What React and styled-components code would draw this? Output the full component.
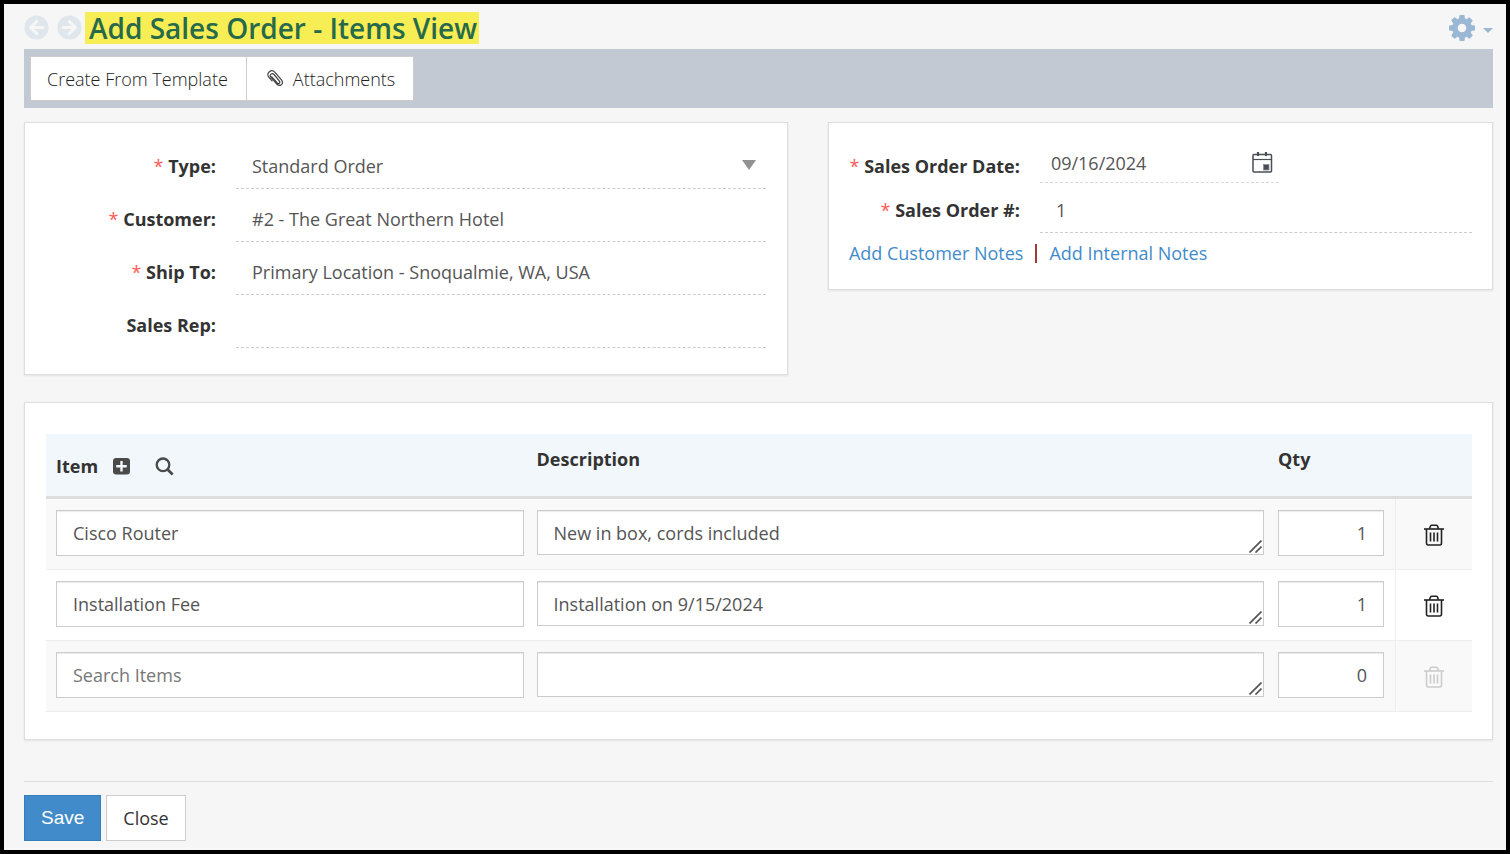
import React from "react";

import styled, { createGlobalStyle, css } from "styled-components";

import { FaArrowCircleLeft, FaArrowCircleRight } from "react-icons/fa";

const items = [
  { id: 1, name: "Cisco Router", description: "New in box, cords included", qty: 1 },
  { id: 2, name: "Installation Fee", description: "Installation on 9/15/2024", qty: 1 },
  { id: 3, name: "", description: "", qty: 0, empty: true },
];

const GearIcon = () => (
  <svg width="26" height="26" viewBox="0 128 1536 1536" fill="currentColor" aria-hidden="true">
    <path d="M1024 896q0-106-75-181t-181-75-181 75-75 181 75 181 181 75 181-75 75-181zm512-109v222q0 12-8 23t-20 13l-185 28q-19 54-39 91 35 50 107 138 10 12 10 25t-9 23q-27 37-99 108t-94 71q-12 0-26-9l-138-108q-44 23-91 38-16 136-29 186-7 28-36 28h-222q-14 0-24.500-8.500t-11.500-21.500l-28-184q-49-16-90-37l-141 107q-10 9-25 9-14 0-25-11-126-114-165-168-7-10-7-23 0-12 8-23 15-21 51-66.500t54-70.500q-27-50-41-99l-183-27q-13-2-21-12.500t-8-23.500v-222q0-12 8-23t19-13l186-28q14-46 39-92-40-57-107-138-10-12-10-24 0-10 9-23 26-36 98.500-107.500t94.500-71.500q13 0 26 10l138 107q44-23 91-38 16-136 29-186 7-28 36-28h222q14 0 24.500 8.500t11.500 21.500l28 184q49 16 90 37l142-107q9-9 24-9 13 0 25 10 129 119 165 170 7 8 7 22 0 12-8 23-15 21-51 66.500t-54 70.500q26 50 41 98l183 28q13 2 21 12.500t8 23.500z" />
  </svg>
);

const CaretIcon = () => (
  <svg width="10" height="10" viewBox="0 0 10 10" fill="currentColor" aria-hidden="true">
    <path d="M0 5h10L5 10z" />
  </svg>
);

const PaperclipIcon = () => (
  <svg width="17" height="17" viewBox="0 0 17 17" fill="none" stroke="#444" strokeWidth="1.200" strokeLinecap="round" aria-hidden="true">
    <path d="M4.800 6.800l5.400 6.200c1.500 1.600 3.500-.1 2.200-1.900L7 4.500C5 2.300 2 4.700 3.900 7.200l5.900 6.900c3 3.200 7.500-.4 4.800-3.900L7.800 2.200C4.400-1.400-1.400 3.100 1.700 7l3.400 3.900" />
  </svg>
);

const CalendarIcon = () => (
  <svg width="21" height="22" viewBox="0 0 21 22" fill="none" stroke="#4a4f57" aria-hidden="true">
    <rect x="1" y="2.500" width="18.500" height="17.500" rx="1" strokeWidth="1.500" />
    <path d="M1 7.500h18.500" strokeWidth="1.200" />
    <path d="M6 0v4M14 0v4" strokeWidth="2.200" />
    <rect x="11.500" y="12.500" width="5.500" height="5.500" fill="#4a4f57" stroke="#8b8f95" strokeWidth=".8" />
  </svg>
);

const PlusSquareIcon = () => (
  <svg width="17" height="17" viewBox="0 0 17 17" aria-hidden="true">
    <rect width="17" height="16.500" rx="3.200" fill="#4a4a4a" />
    <path d="M8.500 3v10.500M3.200 8.250h10.600" stroke="#f1f7fa" strokeWidth="2.400" />
  </svg>
);

const SearchIcon = () => (
  <svg width="19" height="19" viewBox="0 0 19 19" fill="none" stroke="#4a4a4a" aria-hidden="true">
    <circle cx="8" cy="7.800" r="6.300" strokeWidth="2.300" />
    <path d="M12.600 12.400l5 5" strokeWidth="2.800" />
  </svg>
);

const TrashIcon = () => (
  <svg width="20" height="22" viewBox="0 0 20 22" fill="none" stroke="currentColor" strokeWidth="1.600" aria-hidden="true">
    <path d="M0 5h20" />
    <path d="M5.500 4.800l1-2.700q.3-.9 1.300-.9h4.400q1 0 1.300.9l1 2.700" />
    <path d="M2.500 5v14q0 2 1.700 2h11.600q1.700 0 1.700-2V5" />
    <path d="M6.500 8.500v9M10 8.500v9M13.500 8.500v9" />
  </svg>
);

const GripIcon = () => (
  <svg width="13" height="13" viewBox="0 0 13 13" fill="none" stroke="#555" strokeWidth="1.700" aria-hidden="true">
    <path d="M.5 12.500l12-12M6.500 12.500l6-6" />
  </svg>
);

const Field = ({ id, label, required, children }) => (
  <Row>
    <Label htmlFor={id}>
      {required && <Required>*</Required>} {label}:
    </Label>
    {children}
  </Row>
);

const ItemRow = ({ item }) => (
  <tr>
    <td>
      <TextBox aria-label="Item" defaultValue={item.name} placeholder="Search Items" />
    </td>
    <td>
      <AreaWrap>
        <Area aria-label="Description" defaultValue={item.description} rows="1" />
        <Grip>
          <GripIcon />
        </Grip>
      </AreaWrap>
    </td>
    <QtyCell>
      <TextBox $right aria-label="Qty" defaultValue={item.qty} />
    </QtyCell>
    <DeleteCell>
      <DeleteButton type="button" aria-label="Delete item" disabled={item.empty}>
        <TrashIcon />
      </DeleteButton>
    </DeleteCell>
  </tr>
);

const App = () => (
  <Page>
    <GlobalStyle />
    <Header>
      <NavButton type="button" aria-label="Back">
        <FaArrowCircleLeft />
      </NavButton>
      <NavButton type="button" aria-label="Forward">
        <FaArrowCircleRight />
      </NavButton>
      <Title>Add Sales Order - Items View</Title>
      <Settings type="button" aria-label="Settings">
        <GearIcon />
        <CaretIcon />
      </Settings>
    </Header>

    <Toolbar>
      <ToolButton type="button">Create From Template</ToolButton>
      <ToolButton type="button" $icon>
        <PaperclipIcon />
        Attachments
      </ToolButton>
    </Toolbar>

    <Panels>
      <Card>
        <Fields>
          <Field id="type" label="Type" required>
            <SelectWrap>
              <Select id="type" defaultValue="standard">
                <option value="standard">Standard Order</option>
              </Select>
              <Arrow width="14" height="10" viewBox="0 0 14 10" aria-hidden="true">
                <path d="M0 0h14L7 10z" fill="#929292" />
              </Arrow>
            </SelectWrap>
          </Field>
          <Field id="customer" label="Customer" required>
            <LineInput id="customer" defaultValue="#2 - The Great Northern Hotel" />
          </Field>
          <Field id="shipTo" label="Ship To" required>
            <LineInput id="shipTo" defaultValue="Primary Location - Snoqualmie, WA, USA" />
          </Field>
          <Field id="salesRep" label="Sales Rep">
            <LineInput id="salesRep" />
          </Field>
        </Fields>
      </Card>

      <Card>
        <Fields $tight>
          <Field id="orderDate" label="Sales Order Date" required>
            <DateBox>
              <DateInput id="orderDate" defaultValue="09/16/2024" />
              <IconButton type="button" aria-label="Pick a date">
                <CalendarIcon />
              </IconButton>
            </DateBox>
          </Field>
          <Field id="orderNumber" label="Sales Order #" required>
            <LineInput id="orderNumber" defaultValue="1" />
          </Field>
        </Fields>
        <Notes>
          <a href="#customer-notes">Add Customer Notes</a>
          <Divider />
          <a href="#internal-notes">Add Internal Notes</a>
        </Notes>
      </Card>
    </Panels>

    <TableCard>
      <Table>
        <colgroup>
          <ItemCol />
          <col />
          <QtyCol />
          <DeleteCol />
        </colgroup>
        <thead>
          <tr>
            <th>
              <ItemHead>
                Item
                <IconButton type="button" aria-label="Add item">
                  <PlusSquareIcon />
                </IconButton>
                <IconButton type="button" aria-label="Search items">
                  <SearchIcon />
                </IconButton>
              </ItemHead>
            </th>
            <th>Description</th>
            <th>Qty</th>
            <th aria-label="Delete" />
          </tr>
        </thead>
        <tbody>
          {items.map((item) => (
            <ItemRow key={item.id} item={item} />
          ))}
        </tbody>
      </Table>
    </TableCard>

    <Footer>
      <SaveButton type="submit">Save</SaveButton>
      <CloseButton type="button">Close</CloseButton>
    </Footer>
  </Page>
);

const GlobalStyle = createGlobalStyle`
  * {
    box-sizing: border-box;
  }
  body {
    margin: 0;
    background: #f6f6f6;
  }
  body, button, input, select, textarea {
    font-family: "Open Sans", "Noto Sans", sans-serif;
    font-size: 18px;
    font-weight: 400;
    line-height: 26px;
  }
  button {
    cursor: pointer;
  }
`;

const Page = styled.div`
  min-height: 100vh;
  padding: 0 13px 9px 20px;
  border: 4px solid #000;
  background: #f6f6f6;
  color: #333;
`;

const Header = styled.header`
  display: flex;
  align-items: center;
  height: 45px;
  padding-top: 2px;
`;

const plainButton = css`
  display: flex;
  align-items: center;
  padding: 0;
  border: 0;
  background: none;
`;

const NavButton = styled.button`
  ${plainButton}
  margin-right: 8px;
  color: #e0e7ec;
  font-size: 25px;
`;

const Title = styled.h1`
  margin: 0 0 0 -5px;
  padding: 0 2px 0 4px;
  background: #f7ee55;
  color: #276a4b;
  font-size: 28px;
  font-weight: 600;
  line-height: 32px;
`;

const Settings = styled.button`
  ${plainButton}
  gap: 8px;
  margin-left: auto;
  color: #9ab7d3;
`;

const Toolbar = styled.div`
  display: flex;
  padding: 7px 6px;
  background: #c2c9d3;
`;

const ToolButton = styled.button`
  display: flex;
  align-items: center;
  gap: 9px;
  height: 45px;
  padding: 0 18px 0 ${({ $icon }) => ($icon ? "20px" : "16px")};
  border: 1px solid #ccc;
  background: #fff;
  color: #222;
  font-weight: 300;
  & + & {
    margin-left: -1px;
  }
`;

const Panels = styled.div`
  display: grid;
  grid-template-columns: 52% 1fr;
  align-items: start;
  gap: 40px;
  padding: 14px 0 27px;
`;

const Card = styled.section`
  border: 1px solid #ddd;
  background: #fff;
  box-shadow: 0 1px 2px rgba(0, 0, 0, 0.08);
`;

const Fields = styled.div`
  display: grid;
  gap: ${({ $tight }) => ($tight ? "0" : "8px")};
  padding: ${({ $tight }) => ($tight ? "21px 20px 0 0" : "21px 21px 26px 0")};
`;

const Row = styled.div`
  display: grid;
  grid-template-columns: 191px 1fr;
  align-items: center;
  gap: 20px;
  min-height: 44px;
`;

const Label = styled.label`
  padding-bottom: 1px;
  font-weight: 700;
  text-align: right;
  white-space: nowrap;
`;

const Required = styled.span`
  color: #ff5b57;
  font-weight: 400;
`;

const lineField = css`
  width: 100%;
  height: 45px;
  padding: 0 16px;
  border: 0;
  border-bottom: 1px dashed #ccc;
  border-radius: 0;
  background: none;
  color: #555;
`;

const LineInput = styled.input`
  ${lineField}
`;

const SelectWrap = styled.div`
  position: relative;
`;

const Select = styled.select`
  ${lineField}
  display: block;
  appearance: none;
`;

const Arrow = styled.svg`
  position: absolute;
  top: 16px;
  right: 10px;
  pointer-events: none;
`;

const DateBox = styled.div`
  display: flex;
  align-items: center;
  align-self: start;
  width: 239px;
  height: 39px;
  padding: 0 6px 0 11px;
  border-bottom: 1px dashed #d8d8d8;
`;

const DateInput = styled.input`
  flex: 1;
  min-width: 0;
  padding: 0;
  border: 0;
  background: none;
  color: #555;
`;

const IconButton = styled.button`
  ${plainButton}
`;

const Notes = styled.div`
  display: flex;
  align-items: center;
  gap: 12px;
  padding: 7px 20px 23px;
  a {
    color: #428bca;
    text-decoration: none;
  }
`;

const Divider = styled.span`
  width: 2px;
  height: 19px;
  background: #a33a3a;
`;

const TableCard = styled(Card)`
  padding: 31px 20px 27px 21px;
`;

const Table = styled.table`
  width: 100%;
  border-spacing: 0;
  table-layout: fixed;
  th {
    height: 65px;
    padding: 12px 10px 0;
    border-bottom: 3px solid #ddd;
    background: #f1f7fa;
    font-weight: 700;
    text-align: left;
    vertical-align: top;
  }
  td {
    height: 71px;
    padding: 11px 3px 13px 10px;
    border-bottom: 1px solid #eee;
    vertical-align: top;
  }
  td + td {
    padding-right: 4px;
  }
  tbody tr:nth-child(odd) {
    background: #f9f9f9;
  }
`;

const ItemCol = styled.col`
  width: 33.7%;
`;

const QtyCol = styled.col`
  width: 127px;
`;

const DeleteCol = styled.col`
  width: 77px;
`;

const ItemHead = styled.div`
  display: flex;
  align-items: center;
  height: 40px;
  button:first-of-type {
    margin: 0 25px 0 15px;
  }
`;

const boxField = css`
  display: block;
  width: 100%;
  border: 1px solid #ccc;
  border-radius: 0;
  background: #fff;
  box-shadow: inset 0 1px 1px rgba(0, 0, 0, 0.08);
  color: #555;
`;

const TextBox = styled.input`
  ${boxField}
  height: 46px;
  padding: 0 16px;
  text-align: ${({ $right }) => ($right ? "right" : "left")};
  &::placeholder {
    color: #777;
  }
`;

const AreaWrap = styled.div`
  position: relative;
`;

const Area = styled.textarea`
  ${boxField}
  height: 45px;
  padding: 9px 16px;
  overflow: hidden;
  resize: vertical;
  &::-webkit-resizer {
    display: none;
  }
`;

const Grip = styled.span`
  display: flex;
  position: absolute;
  right: 2px;
  bottom: 2px;
  pointer-events: none;
`;

const QtyCell = styled.td`
  &&& {
    padding-right: 11px;
  }
`;

const DeleteCell = styled.td`
  &&& {
    padding: 2px 0 0;
    border-left: 1px solid #eee;
    vertical-align: middle;
  }
`;

const DeleteButton = styled.button`
  ${plainButton}
  margin: 0 auto;
  color: #222;
  &:disabled {
    color: #ccc;
    cursor: default;
  }
`;

const Footer = styled.footer`
  display: flex;
  gap: 5px;
  margin-top: 41px;
  padding-top: 13px;
  border-top: 1px solid #ddd;
`;

const CloseButton = styled.button`
  height: 46px;
  padding: 0 16px;
  border: 1px solid #ccc;
  background: #fff;
  color: #333;
`;

const SaveButton = styled(CloseButton)`
  border-color: #357ebd;
  background: #428bca;
  color: #fff;
  font-family: "Liberation Sans", Arial, sans-serif;
  font-size: 19px;
  font-weight: 400;
`;

export default App;
